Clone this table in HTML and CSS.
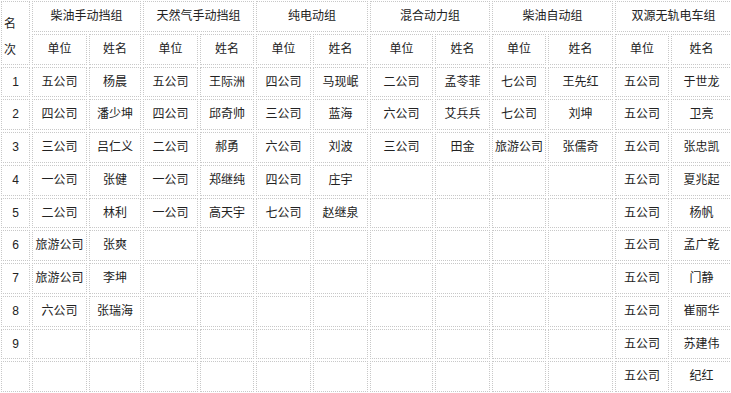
FILE: index.html
```html
<!DOCTYPE html>
<html lang="zh-CN">
<head>
<meta charset="utf-8">
<title>名次表</title>
<link rel="stylesheet" href="styles.css">
</head>
<body>
<table class="rank">
  <colgroup>
    <col class="c-rank">
    <col class="c55"><col class="c52">
    <col class="c55"><col class="c54">
    <col class="c55"><col class="c55">
    <col class="c63"><col class="c55">
    <col class="c54"><col class="c65">
    <col class="c54"><col class="c61">
  </colgroup>
  <thead>
    <tr>
      <th rowspan="2" class="rank-head">名次</th>
      <th colspan="2">柴油手动挡组</th>
      <th colspan="2">天然气手动挡组</th>
      <th colspan="2">纯电动组</th>
      <th colspan="2">混合动力组</th>
      <th colspan="2">柴油自动组</th>
      <th colspan="2">双源无轨电车组</th>
    </tr>
    <tr>
      <th>单位</th><th>姓名</th>
      <th>单位</th><th>姓名</th>
      <th>单位</th><th>姓名</th>
      <th>单位</th><th>姓名</th>
      <th>单位</th><th>姓名</th>
      <th>单位</th><th>姓名</th>
    </tr>
  </thead>
  <tbody>
    <tr>
      <td class="num">1</td>
      <td>五公司</td><td>杨晨</td>
      <td>五公司</td><td>王际洲</td>
      <td>四公司</td><td>马现岷</td>
      <td>二公司</td><td>孟苓菲</td>
      <td>七公司</td><td>王先红</td>
      <td>五公司</td><td>于世龙</td>
    </tr>
    <tr>
      <td class="num">2</td>
      <td>四公司</td><td>潘少坤</td>
      <td>四公司</td><td>邱奇帅</td>
      <td>三公司</td><td>蓝海</td>
      <td>六公司</td><td>艾兵兵</td>
      <td>七公司</td><td>刘坤</td>
      <td>五公司</td><td>卫亮</td>
    </tr>
    <tr>
      <td class="num">3</td>
      <td>三公司</td><td>吕仁义</td>
      <td>二公司</td><td>郝勇</td>
      <td>六公司</td><td>刘波</td>
      <td>三公司</td><td>田金</td>
      <td>旅游公司</td><td>张儒奇</td>
      <td>五公司</td><td>张忠凯</td>
    </tr>
    <tr>
      <td class="num">4</td>
      <td>一公司</td><td>张健</td>
      <td>一公司</td><td>郑继纯</td>
      <td>四公司</td><td>庄宇</td>
      <td></td><td></td>
      <td></td><td></td>
      <td>五公司</td><td>夏兆起</td>
    </tr>
    <tr>
      <td class="num">5</td>
      <td>二公司</td><td>林利</td>
      <td>一公司</td><td>高天宇</td>
      <td>七公司</td><td>赵继泉</td>
      <td></td><td></td>
      <td></td><td></td>
      <td>五公司</td><td>杨帆</td>
    </tr>
    <tr>
      <td class="num">6</td>
      <td>旅游公司</td><td>张爽</td>
      <td></td><td></td>
      <td></td><td></td>
      <td></td><td></td>
      <td></td><td></td>
      <td>五公司</td><td>孟广乾</td>
    </tr>
    <tr>
      <td class="num">7</td>
      <td>旅游公司</td><td>李坤</td>
      <td></td><td></td>
      <td></td><td></td>
      <td></td><td></td>
      <td></td><td></td>
      <td>五公司</td><td>门静</td>
    </tr>
    <tr>
      <td class="num">8</td>
      <td>六公司</td><td>张瑞海</td>
      <td></td><td></td>
      <td></td><td></td>
      <td></td><td></td>
      <td></td><td></td>
      <td>五公司</td><td>崔丽华</td>
    </tr>
    <tr>
      <td class="num">9</td>
      <td></td><td></td>
      <td></td><td></td>
      <td></td><td></td>
      <td></td><td></td>
      <td></td><td></td>
      <td>五公司</td><td>苏建伟</td>
    </tr>
    <tr>
      <td class="num"></td>
      <td></td><td></td>
      <td></td><td></td>
      <td></td><td></td>
      <td></td><td></td>
      <td></td><td></td>
      <td>五公司</td><td>纪红</td>
    </tr>
  </tbody>
</table>
</body>
</html>
```

FILE: styles.css
```css
html, body {
  margin: 0;
  padding: 0;
  background: #fff;
  overflow: hidden;
}

.rank {
  table-layout: fixed;
  width: 735px;
  border-collapse: separate;
  border-spacing: 2px;
  margin: -1px 0 0 -1px;
  font-family: "Liberation Sans", "Noto Sans CJK SC", sans-serif;
  font-size: 12px;
  color: #222;
}

.c-rank { width: 29px; }
.c52 { width: 52px; }
.c54 { width: 54px; }
.c55 { width: 55px; }
.c61 { width: 61px; }
.c63 { width: 63px; }
.c65 { width: 65px; }

.rank th,
.rank td {
  border: 1px dotted #c8c8c8;
  padding: 0 2px;
  height: 28.75px;
  line-height: 28.75px;
  text-align: center;
  vertical-align: middle;
  font-weight: normal;
  white-space: nowrap;
  overflow: hidden;
}

.rank th.rank-head {
  white-space: normal;
  text-align: left;
  line-height: 26px;
  padding-top: 8px;
}

.rank td.num {
  color: #222;
}
```
